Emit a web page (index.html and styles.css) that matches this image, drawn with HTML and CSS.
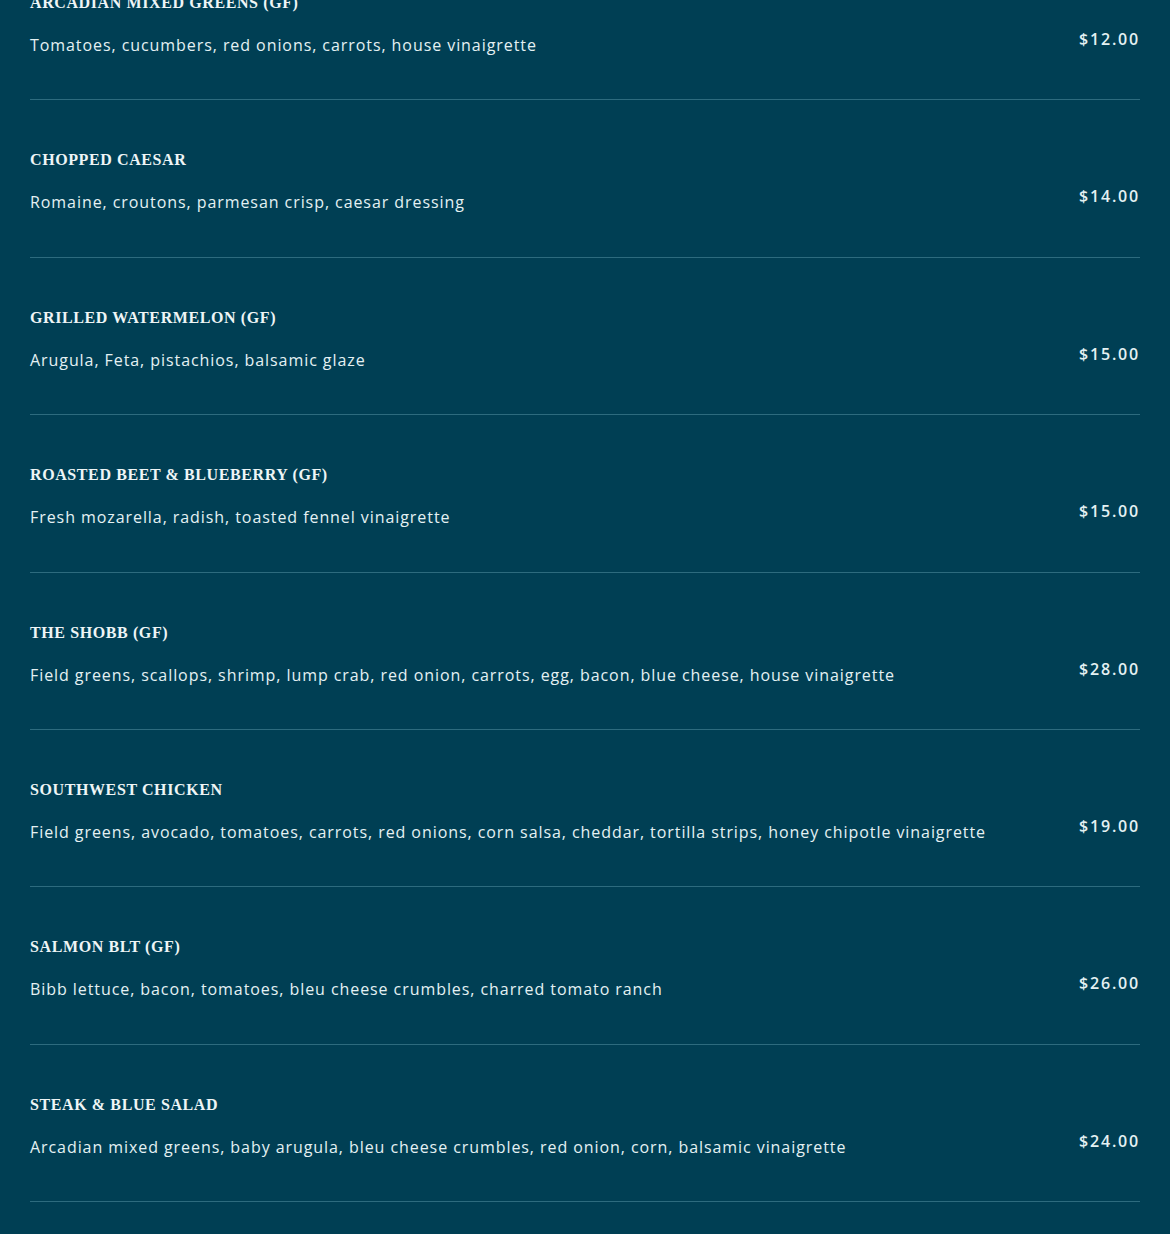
FILE: index.html
```html
<!DOCTYPE html>
<html lang="en">
<head>
<meta charset="utf-8">
<title>Salads</title>
<link rel="stylesheet" href="styles.css">
</head>
<body>
<main class="menu">
  <div class="item">
    <div class="info">
      <h3 class="name">Arcadian Mixed Greens (GF)</h3>
      <p class="desc">Tomatoes, cucumbers, red onions, carrots, house vinaigrette</p>
    </div>
    <div class="price">$12.00</div>
  </div>
  <div class="item">
    <div class="info">
      <h3 class="name">Chopped Caesar</h3>
      <p class="desc">Romaine, croutons, parmesan crisp, caesar dressing</p>
    </div>
    <div class="price">$14.00</div>
  </div>
  <div class="item">
    <div class="info">
      <h3 class="name">Grilled Watermelon (GF)</h3>
      <p class="desc">Arugula, Feta, pistachios, balsamic glaze</p>
    </div>
    <div class="price">$15.00</div>
  </div>
  <div class="item">
    <div class="info">
      <h3 class="name">Roasted Beet &amp; Blueberry (GF)</h3>
      <p class="desc">Fresh mozarella, radish, toasted fennel vinaigrette</p>
    </div>
    <div class="price">$15.00</div>
  </div>
  <div class="item">
    <div class="info">
      <h3 class="name">The Shobb (GF)</h3>
      <p class="desc">Field greens, scallops, shrimp, lump crab, red onion, carrots, egg, bacon, blue cheese, house vinaigrette</p>
    </div>
    <div class="price">$28.00</div>
  </div>
  <div class="item">
    <div class="info">
      <h3 class="name">Southwest Chicken</h3>
      <p class="desc">Field greens, avocado, tomatoes, carrots, red onions, corn salsa, cheddar, tortilla strips, honey chipotle vinaigrette</p>
    </div>
    <div class="price">$19.00</div>
  </div>
  <div class="item">
    <div class="info">
      <h3 class="name">Salmon BLT (GF)</h3>
      <p class="desc">Bibb lettuce, bacon, tomatoes, bleu cheese crumbles, charred tomato ranch</p>
    </div>
    <div class="price">$26.00</div>
  </div>
  <div class="item">
    <div class="info">
      <h3 class="name">Steak &amp; Blue Salad</h3>
      <p class="desc">Arcadian mixed greens, baby arugula, bleu cheese crumbles, red onion, corn, balsamic vinaigrette</p>
    </div>
    <div class="price">$24.00</div>
  </div>
</main>
</body>
</html>
```

FILE: styles.css
```css
html, body {
  margin: 0;
  padding: 0;
  background: #003f54;
}

body {
  color: #e4f1f3;
  font-family: "Open Sans", "Liberation Sans", sans-serif;
  height: 1234px;
  overflow: hidden;
}

.menu {
  padding: 0 30px;
  margin-top: -57px;
}

.item {
  display: flex;
  align-items: flex-end;
  justify-content: space-between;
  gap: 40px;
  padding: 49px 0 43.4px;
  border-bottom: 1px solid #2d6b7e;
}

.info {
  display: flex;
  flex-direction: column;
  gap: 20px;
}

.name {
  margin: 0;
  font-family: "Liberation Serif", "DejaVu Serif", serif;
  font-weight: bold;
  font-size: 16px;
  line-height: 22px;
  text-transform: uppercase;
  letter-spacing: 0.6px;
  color: #eef5f6;
}

.desc {
  margin: 0;
  font-size: 16px;
  line-height: 22px;
  letter-spacing: 0.93px;
}

.price {
  font-size: 16px;
  line-height: 22px;
  font-weight: 600;
  letter-spacing: 1.8px;
  margin-right: 0;
  padding-bottom: 6px;
  white-space: nowrap;
}
```
